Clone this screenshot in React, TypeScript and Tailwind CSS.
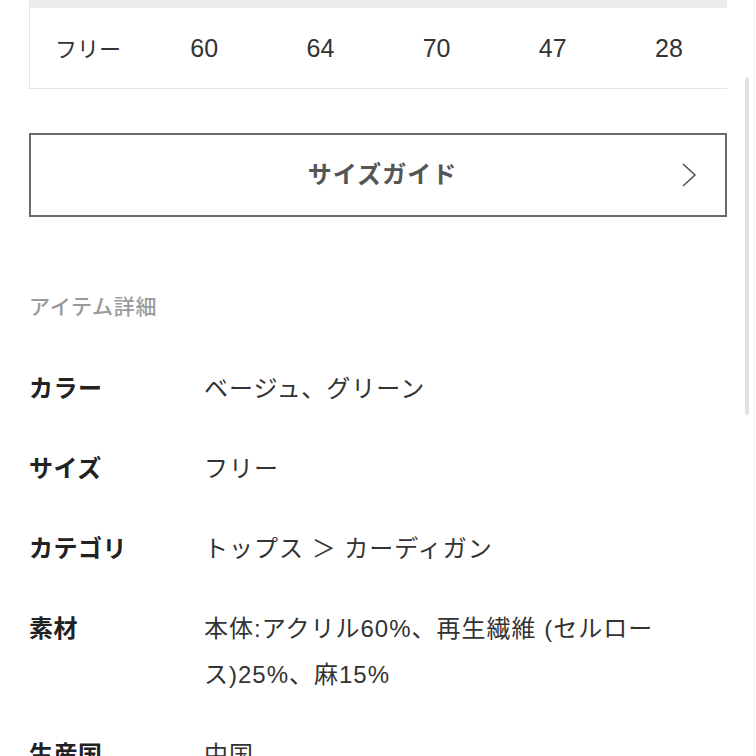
import React from 'react';

const sizeRow = ['フリー', '60', '64', '70', '47', '28'];

const details: { label: string; value: string }[] = [
    { label: 'カラー', value: 'ベージュ、グリーン' },
    { label: 'サイズ', value: 'フリー' },
    { label: 'カテゴリ', value: 'トップス ＞ カーディガン' },
    { label: '素材', value: '本体:アクリル60%、再生繊維 (セルロース)25%、麻15%' },
    { label: '生産国', value: '中国' },
];

export default function App() {
    return (
        <div
            className="relative w-[756px] h-[756px] overflow-hidden bg-white"
            style={{ fontFamily: '"Liberation Sans", "Noto Sans CJK JP", sans-serif' }}
        >
            {/* scrollbar */}
            <div className="absolute left-[745px] top-[77px] w-[4px] h-[338px] rounded-full bg-[#e3e3e3]" />
            <div className="absolute right-[1px] top-0 w-[1px] h-full bg-[#ededed]" />

            <div className="px-[29px]">
                {/* size table tail */}
                <div className="h-[8px] bg-[#ececec]" />
                <div className="grid grid-cols-6 h-[81px] pt-[2px] items-center border-l border-b border-[#e4e4e4] text-[#333]">
                    {sizeRow.map((c, i) => (
                        <div key={i} className={`text-center ${i === 0 ? 'text-[22px]' : 'text-[25px]'}`}>{c}</div>
                    ))}
                </div>

                {/* size guide button */}
                <button className="mt-[44px] w-full h-[84px] pl-[9px] border-2 border-[#6a6a6a] relative flex items-center justify-center">
                    <span className="text-[24px] font-bold text-[#555] tracking-[1px]">サイズガイド</span>
                    <svg className="absolute right-[28px] top-1/2 -translate-y-1/2" width="16" height="26" viewBox="0 0 16 26" fill="none">
                        <polyline points="2,2 14,13 2,24" stroke="#555" strokeWidth="1.6" />
                    </svg>
                </button>

                {/* item details */}
                <h2 className="mt-[75px] text-[21px] leading-[30px] font-medium text-[#9a9a9a] tracking-[0.7px]">アイテム詳細</h2>

                <div className="mt-[44px] flex flex-col gap-[34px]">
                    {details.map((d) => (
                        <div key={d.label} className="flex text-[24px] leading-[46px]">
                            <div className="w-[175px] shrink-0 font-bold text-[#222] tracking-[0.5px]">{d.label}</div>
                            <div className="w-[480px] text-[#333] tracking-[1px]">{d.value}</div>
                        </div>
                    ))}
                </div>
            </div>
        </div>
    );
}
